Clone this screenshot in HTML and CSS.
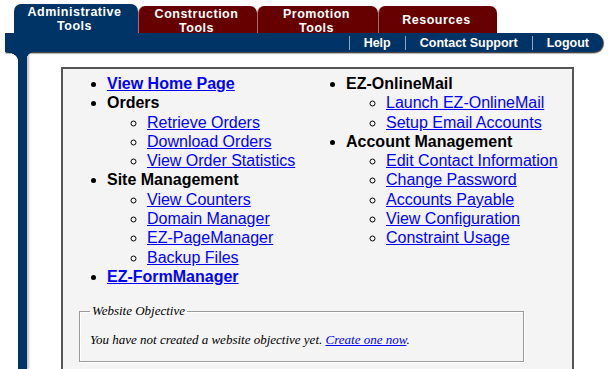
FILE: index.html
```html
<!DOCTYPE html>
<html lang="en">
<head>
    <meta charset="UTF-8">
    <title>Administrative Tools</title>
    <link rel="stylesheet" href="styles.css">
</head>
<body>
    <div class="tabs">
        <div class="tab tab-admin">Administrative<br>Tools</div>
        <div class="tab tab-red tab-two">Construction<br>Tools</div>
        <div class="tab tab-red tab-two tab-wide">Promotion<br>Tools</div>
        <div class="tab tab-red">Resources</div>
    </div>
    <div class="navbar">
        <a class="nav-link" href="#">Help</a>
        <a class="nav-link" href="#">Contact Support</a>
        <a class="nav-link" href="#">Logout</a>
    </div>
    <div class="main">
        <div class="rail"></div>
        <div class="content">
            <div class="box">
                <div class="columns">
                    <ul class="menu">
                        <li><a class="strong" href="#">View Home Page</a></li>
                        <li><b>Orders</b>
                            <ul>
                                <li><a href="#">Retrieve Orders</a></li>
                                <li><a href="#">Download Orders</a></li>
                                <li><a href="#">View Order Statistics</a></li>
                            </ul>
                        </li>
                        <li><b>Site Management</b>
                            <ul>
                                <li><a href="#">View Counters</a></li>
                                <li><a href="#">Domain Manager</a></li>
                                <li><a href="#">EZ-PageManager</a></li>
                                <li><a href="#">Backup Files</a></li>
                            </ul>
                        </li>
                        <li><a class="strong" href="#">EZ-FormManager</a></li>
                    </ul>
                    <ul class="menu">
                        <li><b>EZ-OnlineMail</b>
                            <ul>
                                <li><a href="#">Launch EZ-OnlineMail</a></li>
                                <li><a href="#">Setup Email Accounts</a></li>
                            </ul>
                        </li>
                        <li><b>Account Management</b>
                            <ul>
                                <li><a href="#">Edit Contact Information</a></li>
                                <li><a href="#">Change Password</a></li>
                                <li><a href="#">Accounts Payable</a></li>
                                <li><a href="#">View Configuration</a></li>
                                <li><a href="#">Constraint Usage</a></li>
                            </ul>
                        </li>
                    </ul>
                </div>
                <fieldset class="objective">
                    <legend>Website Objective</legend>
                    <p>You have not created a website objective yet. <a href="#">Create one now</a>.</p>
                </fieldset>
            </div>
        </div>
    </div>
</body>
</html>
```

FILE: styles.css
```css
html, body {
    margin: 0;
    padding: 0;
    height: 369px;
    overflow: hidden;
    background-color: #fff;
}
body {
    font-family: "Liberation Sans", Arial, sans-serif;
}
.tabs {
    display: flex;
    align-items: flex-end;
    height: 33px;
    padding-left: 14px;
}
.tab {
    display: flex;
    align-items: center;
    justify-content: center;
    box-sizing: border-box;
    text-align: center;
    color: #fff;
    font-weight: bold;
    font-size: 12.5px;
    line-height: 14px;
    letter-spacing: 0.5px;
    border-radius: 7px 7px 0 0;
    padding-right: 3px;
}
.tab-admin {
    width: 124px;
    height: 29px;
    background-color: #003366;
}
.tab-red {
    width: 119px;
    height: 27px;
    background-color: #660000;
    border-left: 1px solid #a07070;
}
.tab-two {
    padding-top: 3px;
}
.tab-wide {
    width: 121px;
}
.navbar {
    display: flex;
    justify-content: flex-end;
    align-items: center;
    margin-left: 5px;
    width: 598px;
    height: 19px;
    background-color: #003366;
    border-radius: 0 10px 10px 0;
    box-shadow: 1px 1px 1px rgba(0, 0, 0, 0.7), 0 2px 1px #c4c4c4;
}
.nav-link {
    color: #fff;
    text-decoration: none;
    font-weight: bold;
    font-size: 12.5px;
    line-height: 14px;
    padding: 0 14px;
    border-left: 1px solid #8fa6c4;
}
.main {
    display: flex;
    height: 317px;
    overflow: hidden;
}
.rail {
    position: relative;
    width: 9px;
    margin-left: 18px;
    background-color: #003366;
    box-shadow: 2px 0 2px #c4c4c4;
}
.rail::before {
    content: "";
    position: absolute;
    top: 0;
    left: -13px;
    width: 13px;
    height: 8px;
    background: radial-gradient(ellipse 13px 8px at 0 100%, transparent 96%, #003366 100%);
}
.rail::after {
    content: "";
    position: absolute;
    top: 0;
    right: -7px;
    width: 7px;
    height: 6px;
    background: radial-gradient(ellipse 7px 6px at 100% 100%, transparent 96%, #003366 100%);
}
.content {
    padding: 15px 0 0 34px;
}
.box {
    box-sizing: border-box;
    width: 513px;
    height: 320px;
    background-color: #f4f4f4;
    border: 2px solid #555;
    padding: 5px 0 0 4px;
}
.columns {
    display: grid;
    grid-template-columns: 239px 1fr;
}
.menu {
    margin: 0;
    padding-left: 40px;
    font-size: 16px;
    line-height: 19.3px;
}
.menu ul {
    margin: 0;
    padding-left: 40px;
}
.menu a {
    color: #0000ff;
}
.menu .strong {
    font-weight: bold;
}
.objective {
    width: 445px;
    box-sizing: border-box;
    margin: 17px 0 0 12px;
    padding: 0 10px;
    border: 1px solid #9a9a9a;
    box-shadow: inset 1px 1px 0 #fff, 1px 1px 0 #fff;
    font-family: "Liberation Serif", "Times New Roman", serif;
    font-style: italic;
    font-size: 13px;
}
.objective legend {
    padding: 0 2px;
}
.objective p {
    margin: 13px 0;
}
.objective a {
    color: #0000ff;
}
```
